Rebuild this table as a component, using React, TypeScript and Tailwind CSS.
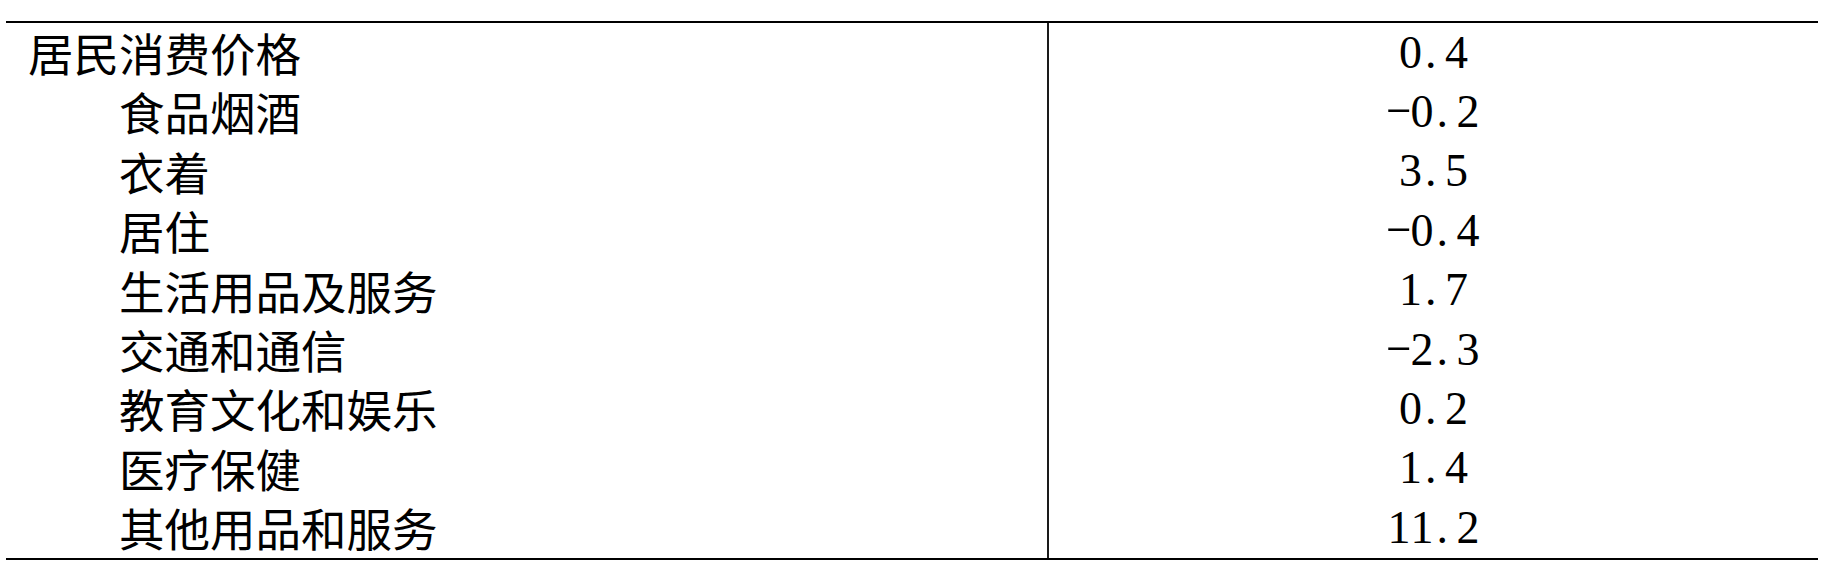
import React from "react";

const rows: { label: string; value: string; indent: boolean }[] = [
  { label: "居民消费价格", value: "0.4", indent: false },
  { label: "食品烟酒", value: "-0.2", indent: true },
  { label: "衣着", value: "3.5", indent: true },
  { label: "居住", value: "-0.4", indent: true },
  { label: "生活用品及服务", value: "1.7", indent: true },
  { label: "交通和通信", value: "-2.3", indent: true },
  { label: "教育文化和娱乐", value: "0.2", indent: true },
  { label: "医疗保健", value: "1.4", indent: true },
  { label: "其他用品和服务", value: "11.2", indent: true },
];

function Num({ value }: { value: string }) {
  return (
    <span className="inline-flex font-['Liberation_Serif'] text-[46px] leading-none text-black">
      {value.split("").map((ch, i) => {
        if (ch === ".") {
          return (
            <span key={i} className="inline-block w-[23px] pl-[3px] text-left">
              .
            </span>
          );
        }
        if (ch === "-") {
          return (
            <span key={i} className="inline-block w-[23px] text-center">
              <span className="inline-block scale-x-[1.75] scale-y-[0.75] -translate-y-[4px]">-</span>
            </span>
          );
        }
        return (
          <span key={i} className="inline-block w-[23px] text-center">
            {ch}
          </span>
        );
      })}
    </span>
  );
}

export default function App() {
  return (
    <div className="w-[1823px] h-[562px] bg-white px-[6px] pt-[21px] overflow-hidden">
      <div className="w-[1812px] border-t-2 border-b-2 border-black">
        {rows.map((r, i) => (
          <div key={i} className="flex h-[59.4px]">
            <div
              className={`w-[1043px] border-r-2 border-[#1a1a1a] flex items-center ${
                r.indent ? "pl-[113px]" : "pl-[22px]"
              }`}
            >
              <span className="font-['Noto_Sans_CJK_SC'] text-[45.5px] leading-none text-black whitespace-nowrap">
                {r.label}
              </span>
            </div>
            <div className="flex-1 flex items-center justify-center">
              <Num value={r.value} />
            </div>
          </div>
        ))}
      </div>
    </div>
  );
}
